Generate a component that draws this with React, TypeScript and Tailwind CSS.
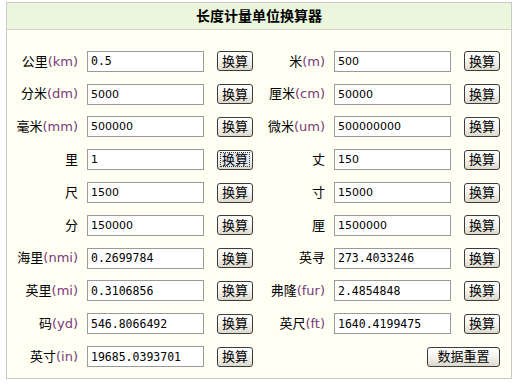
import React from 'react';

type Unit = { cn: string; en?: string; value: string; mono?: boolean; focus?: boolean };

const rows: [Unit, Unit | null][] = [
  [{ cn: '公里', en: 'km', value: '0.5', mono: true }, { cn: '米', en: 'm', value: '500' }],
  [{ cn: '分米', en: 'dm', value: '5000' }, { cn: '厘米', en: 'cm', value: '50000' }],
  [{ cn: '毫米', en: 'mm', value: '500000' }, { cn: '微米', en: 'um', value: '500000000' }],
  [{ cn: '里', value: '1', focus: true }, { cn: '丈', value: '150' }],
  [{ cn: '尺', value: '1500' }, { cn: '寸', value: '15000' }],
  [{ cn: '分', value: '150000' }, { cn: '厘', value: '1500000' }],
  [{ cn: '海里', en: 'nmi', value: '0.2699784', mono: true }, { cn: '英寻', value: '273.4033246', mono: true }],
  [{ cn: '英里', en: 'mi', value: '0.3106856', mono: true }, { cn: '弗隆', en: 'fur', value: '2.4854848', mono: true }],
  [{ cn: '码', en: 'yd', value: '546.8066492', mono: true }, { cn: '英尺', en: 'ft', value: '1640.4199475', mono: true }],
  [{ cn: '英寸', en: 'in', value: '19685.0393701', mono: true }, null],
];

const cjk = "font-['DejaVu_Sans','Noto_Sans_CJK_SC',sans-serif]";

const XpButton = ({ label, focus, wide }: { label: string; focus?: boolean; wide?: boolean }) => (
  <button
    className={`h-[20px] ${wide ? 'w-[73px]' : 'w-[36px]'} rounded-[3px] border border-[#3c3c3c] bg-gradient-to-b from-white via-[#f4f3ee] to-[#dcd9cc] text-[13px] leading-none text-black ${cjk} flex items-center justify-center`}
  >
    <span className={focus ? 'px-[1px] outline outline-1 outline-dotted outline-[#333] bg-[#e4e8f4]' : ''}>{label}</span>
  </button>
);

const Cell = ({ u }: { u: Unit }) => (
  <div className="flex items-center w-[247px]">
    <div className={`w-[71px] text-right text-[13px] text-black ${cjk}`}>
      {u.cn}
      {u.en && <span className="text-[#7a3a7a]">({u.en})</span>}
    </div>
    <input
      readOnly
      value={u.value}
      className={`ml-[9px] h-[21px] w-[117px] border border-[#9a9a9a] bg-white px-[3px] text-black outline-none ${
        u.mono ? "font-['DejaVu_Sans_Mono',monospace] text-[11.5px]" : "font-['DejaVu_Sans',sans-serif] text-[11px]"
      }`}
    />
    <div className="ml-[13px]">
      <XpButton label="换算" focus={u.focus} />
    </div>
  </div>
);

export default function App() {
  return (
    <div className="w-[521px] h-[385px] bg-white pt-[2px] pl-[6px]">
      <div className="w-[506px] h-[377px] border border-[#c9c9c9] bg-[#fffff4] flex flex-col">
        <div className={`h-[27px] bg-[#ebf6dd] border-b border-[#cfd8c2] flex items-center justify-center text-[14px] font-bold text-black ${cjk}`}>
          长度计量单位换算器
        </div>
        <div className="pt-[15px] flex flex-col">
          {rows.map(([l, r], i) => (
            <div key={i} className="h-[32.8px] flex items-center">
              <Cell u={l} />
              {r ? (
                <Cell u={r} />
              ) : (
                <div className="w-[247px] flex justify-end pr-[1px]">
                  <XpButton label="数据重置" wide />
                </div>
              )}
            </div>
          ))}
        </div>
      </div>
    </div>
  );
}
